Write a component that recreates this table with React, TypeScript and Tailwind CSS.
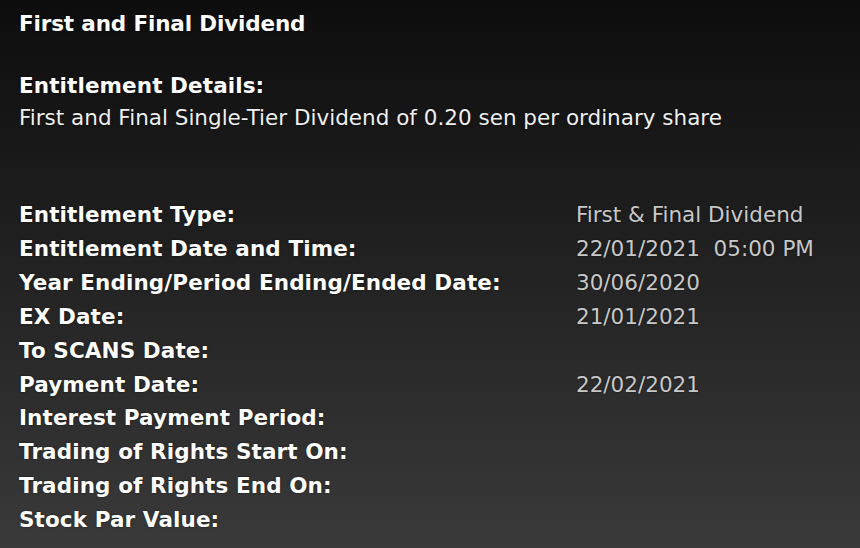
import React from 'react';

const rows: { label: string; value?: string }[] = [
  { label: 'Entitlement Type:', value: 'First & Final Dividend' },
  { label: 'Entitlement Date and Time:', value: '22/01/2021\u00a0\u00a005:00 PM' },
  { label: 'Year Ending/Period Ending/Ended Date:', value: '30/06/2020' },
  { label: 'EX Date:', value: '21/01/2021' },
  { label: 'To SCANS Date:' },
  { label: 'Payment Date:', value: '22/02/2021' },
  { label: 'Interest Payment Period:' },
  { label: 'Trading of Rights Start On:' },
  { label: 'Trading of Rights End On:' },
  { label: 'Stock Par Value:' },
];

const App: React.FC = () => {
  return (
    <div className="w-[860px] h-[548px] overflow-hidden bg-gradient-to-b from-[#0d0d0d] to-[#3a3a3a] font-['DejaVu_Sans',sans-serif] text-[21.5px] text-white [text-shadow:0_0_2px_rgba(0,0,0,0.6)]">
      <div className="pl-[19px] pt-[8px]">
        <h1 className="font-bold leading-[32px] tracking-[-0.15px]">First and Final Dividend</h1>

        {/* details */}
        <div className="mt-[30px]">
          <div className="font-bold leading-[32px] tracking-[0.1px]">Entitlement Details:</div>
          <div className="leading-[32px] text-[#f0f0f0]">
            First and Final Single-Tier Dividend of 0.20 sen per ordinary share
          </div>
        </div>

        <div className="mt-[64px] grid grid-cols-[557px_1fr]">
          {rows.map((r) => (
            <React.Fragment key={r.label}>
              <div className="font-bold leading-[33.9px] tracking-[0.1px]">{r.label}</div>
              <div className="leading-[33.9px] text-[#c8c8c8]">{r.value}</div>
            </React.Fragment>
          ))}
        </div>
      </div>
    </div>
  );
};

export default App;
